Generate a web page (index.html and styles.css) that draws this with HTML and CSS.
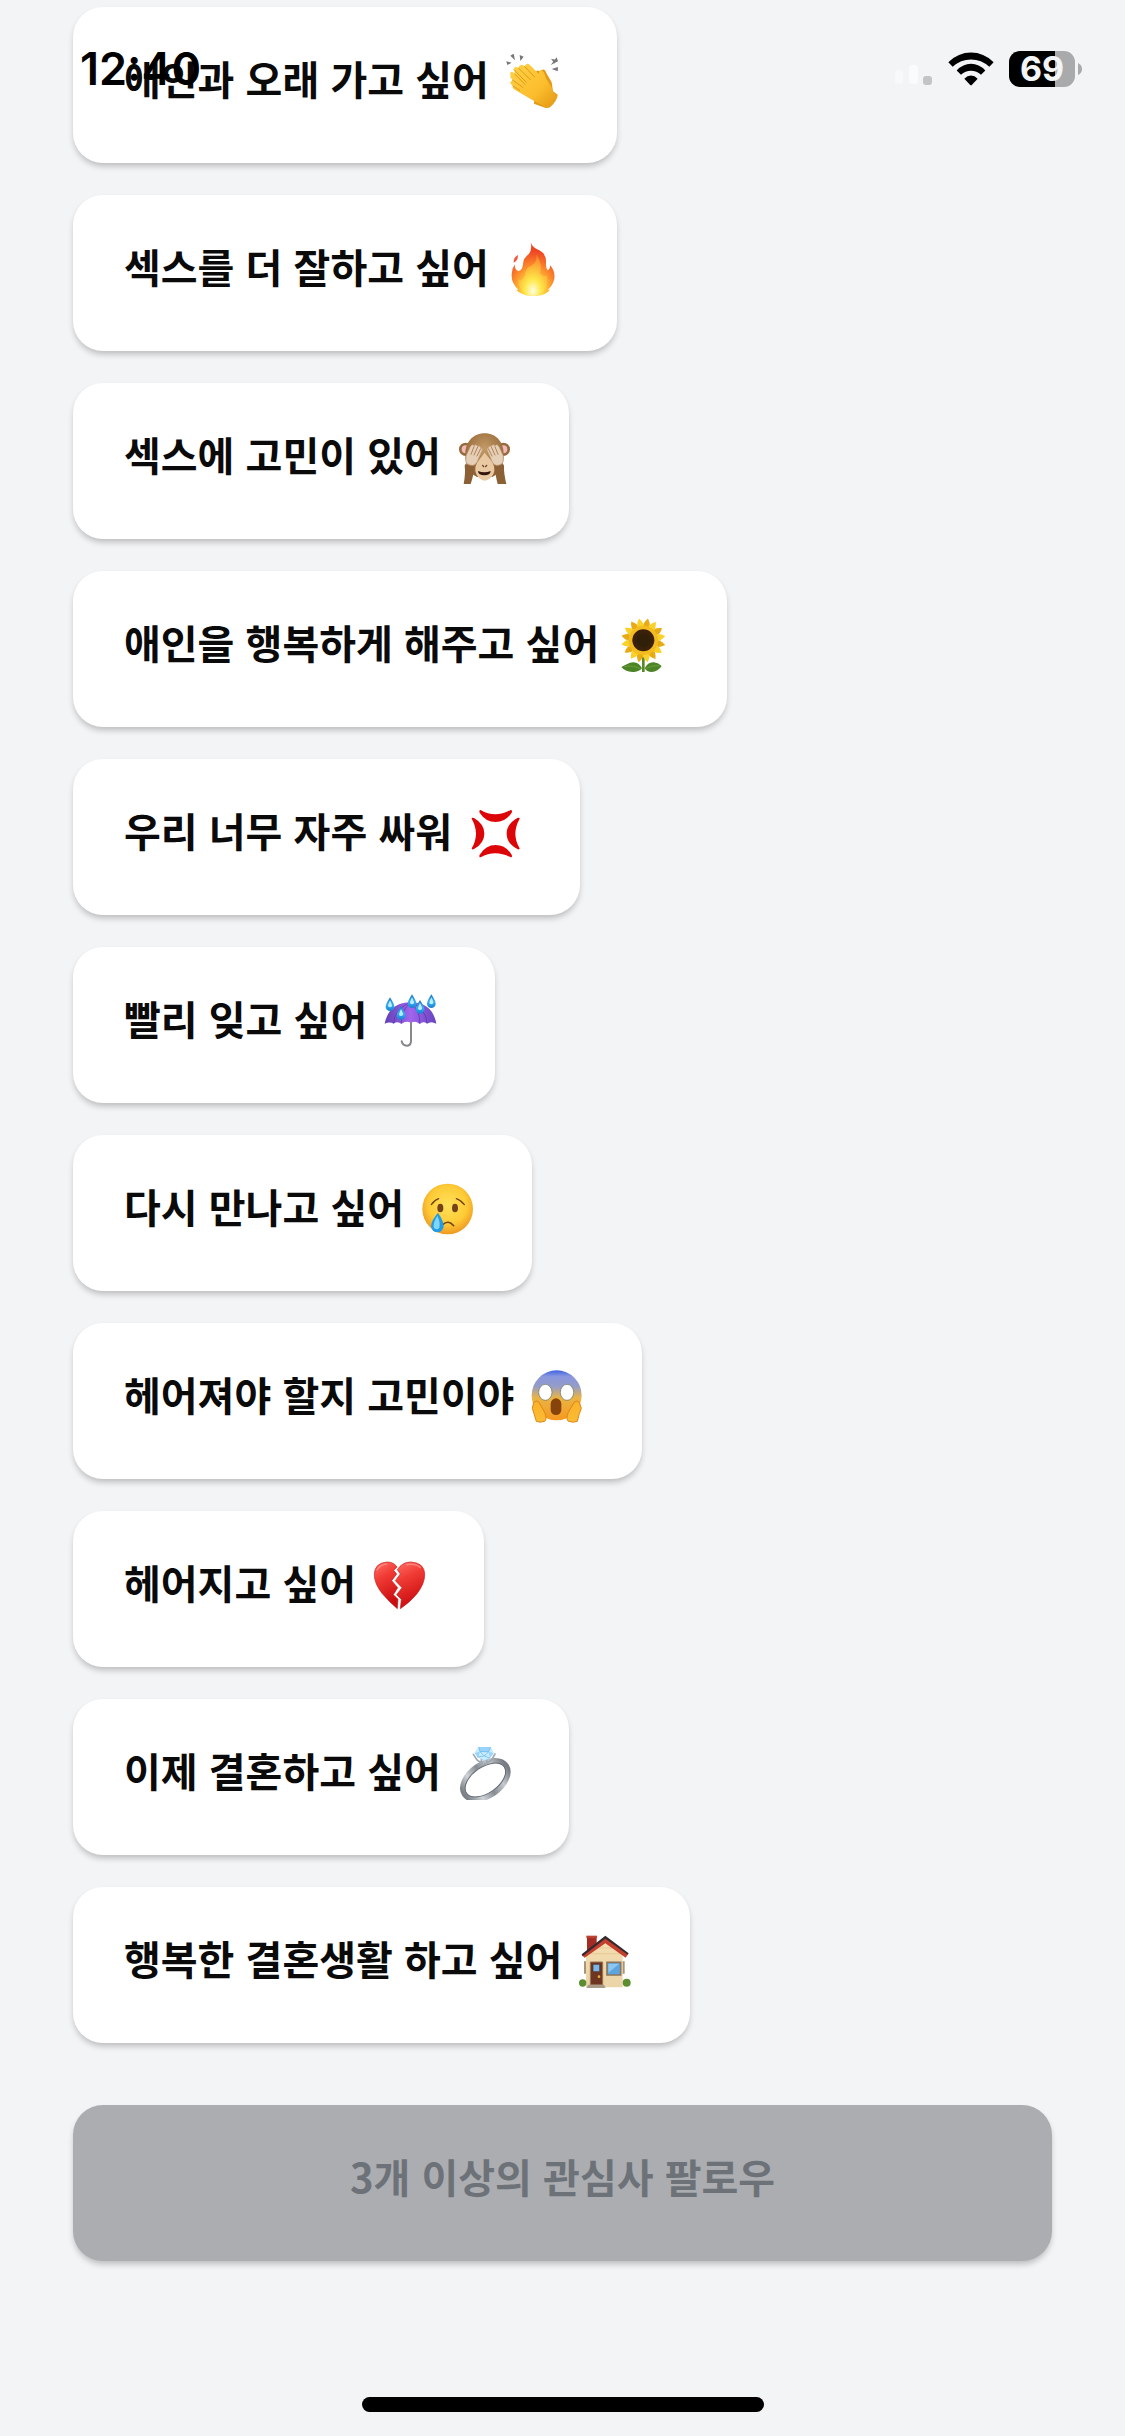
FILE: index.html
```html
<!DOCTYPE html>
<html lang="ko">
<head>
<meta charset="utf-8">
<meta name="viewport" content="width=device-width, initial-scale=1">
<title>관심사 선택</title>
<link rel="stylesheet" href="styles.css">
</head>
<body>
<header class="status">
  <time class="clock">12:40</time>
  <div class="indicators">
    <svg class="signal" viewBox="0 0 38 36" aria-hidden="true">
      <rect x="0" y="19" width="8" height="14" rx="3" fill="#f8f9fa"/>
      <rect x="14" y="14" width="9" height="19" rx="3" fill="#fafbfc"/>
      <rect x="28" y="25" width="9" height="9" rx="3" fill="#c3c4c5"/>
    </svg>
    <svg class="wifi" viewBox="204 65 138 101" aria-hidden="true">
      <path d="M205 95Q235 66 273 66T341 95L328 109Q304 87 273 87T218 109Z"/>
      <path d="M230 120Q249 100 273 100T316 120L303 133Q290 121 273 121T243 133Z"/>
      <path d="M253 145Q262 135 273 135T293 145L276 163Q273 166 270 163Z"/>
    </svg>
    <div class="battery">
      <span class="level">69</span>
      <svg class="nub" viewBox="0 0 4 12" aria-hidden="true"><path d="M0 0Q4 2 4 6T0 12Z" fill="#a9aaab"/></svg>
    </div>
  </div>
</header>

<main class="page">
  <ul class="topics">
    <li><button class="topic" type="button">애인과 오래 가고 싶어
      <svg class="emoji" viewBox="51 45 162 162" aria-hidden="true">
        <defs>
          <linearGradient id="skin" x1="0" y1="0" x2="1" y2="1"><stop offset="0" stop-color="#ffd24a"/><stop offset=".6" stop-color="#fcbd2c"/><stop offset="1" stop-color="#e19413"/></linearGradient>
        </defs>
        <path fill="#777" d="M64 50L74 44 78 64ZM52 67L68 71 55 78ZM92 48L104 53 94 66ZM186 59L199 62 197 74ZM203 55L207 67 185 78ZM188 90L207 84 206 97Z"/>
        <path fill="#e39b17" d="M139 101Q143 92 151 96L160 92Q168 90 172 102L188 130 192 157 206 167Q206 178 190 196L170 207 135 194Z"/>
        <path fill="url(#skin)" d="M65 110Q60 98 70 98L77 105 75 88Q80 78 89 88L90 82Q98 72 107 82Q112 70 122 77L150 106Q148 94 157 94Q165 96 170 116L188 146 192 159 205 169Q203 188 184 204Q172 211 162 200L126 181 80 154Q67 148 72 141L66 136Q60 126 71 126L70 121Q61 117 65 110Z"/>
        <path fill="none" stroke="#e09a18" stroke-width="3" stroke-linecap="round" d="M75 92L112 130M89 88L124 122M107 83L137 114M70 123L102 145M72 141L92 154M77 105L109 137"/>
      </svg></button></li>
    <li><button class="topic" type="button">섹스를 더 잘하고 싶어
      <svg class="emoji" viewBox="51 54 162 162" aria-hidden="true">
        <defs>
          <radialGradient id="fire" cx=".5" cy=".92" r=".9"><stop offset="0" stop-color="#fff8b0"/><stop offset=".25" stop-color="#ffd83c"/><stop offset=".55" stop-color="#fb8a2c"/><stop offset=".85" stop-color="#ee4523"/></radialGradient>
          <radialGradient id="flame" cx=".5" cy=".88" r=".8"><stop offset="0" stop-color="#fffde0"/><stop offset=".35" stop-color="#ffe84a"/><stop offset="1" stop-color="#fb8f2c"/></radialGradient>
        </defs>
        <path fill="#ee5b3d" d="M87 93Q73 99 74 116Q87 111 87 93Z"/>
        <path fill="url(#fire)" d="M125 55Q130 71 151 79Q173 90 171 118Q170 131 176 139Q182 137 184 124Q201 146 195 168Q190 187 176 197L183 197Q168 216 132 217Q99 215 81 197L88 197Q68 178 68 155Q67 137 77 121Q77 138 88 141Q100 140 102 121Q102 103 119 91Q130 79 125 55Z"/>
        <path fill="url(#flame)" d="M142 92Q163 125 153 148Q160 161 174 154Q182 211 132 215Q89 214 88 166Q99 173 108 153Q109 130 127 125Q147 112 142 92Z"/>
      </svg></button></li>
    <li><button class="topic" type="button">섹스에 고민이 있어
      <svg class="emoji" viewBox="57 48 162 162" aria-hidden="true">
        <defs>
          <radialGradient id="fur" cx=".5" cy=".35" r=".65"><stop offset="0" stop-color="#c39a66"/><stop offset="1" stop-color="#8e6131"/></radialGradient>
        </defs>
        <circle cx="80" cy="106" r="20" fill="#956a3e"/><circle cx="193" cy="106" r="20" fill="#956a3e"/>
        <circle cx="80" cy="106" r="12" fill="#f1b9b7"/><circle cx="193" cy="106" r="12" fill="#f1b9b7"/>
        <path fill="url(#fur)" d="M137 58C174 58 194 87 194 120Q196 171 160 189H114Q77 171 79 120C79 87 100 58 137 58Z"/>
        <path fill="#e8c9a2" d="M120 138L137 116 155 138Q172 158 163 181Q153 199 137 200Q121 199 112 181Q103 158 120 138Z"/>
        <path fill="#33150c" d="M117 171Q136 179 155 171Q154 184 136 184T117 171Z"/>
        <path fill="none" stroke="#6c4325" stroke-width="4" stroke-linecap="round" d="M131 154L134 158M143 154L140 158"/>
        <path fill="#8b6035" d="M80 149Q92 161 107 152Q103 188 95 210H74Q80 177 77 155ZM192 149Q180 161 166 152Q170 188 176 210H202Q194 177 195 155Z"/>
        <path fill="#e6cfb7" stroke="#c29e7a" stroke-width="2" d="M81 126L94 98Q100 88 105 95Q112 88 116 97Q123 93 125 101Q132 101 129 110L119 132Q113 153 101 154Q83 153 81 143ZM193 126L180 98Q174 88 168 95Q161 88 157 97Q150 93 148 101Q142 101 145 110L155 132Q161 153 173 154Q190 153 192 143Z"/>
        <path fill="none" stroke="#ad8259" stroke-width="3" stroke-linecap="round" d="M105 98L96 121M116 99L105 123M125 104L114 126M168 98L177 121M157 99L168 123M148 104L159 126"/>
      </svg></button></li>
    <li><button class="topic" type="button">애인을 행복하게 해주고 싶어
      <svg class="emoji" viewBox="57 54 162 162" aria-hidden="true">
        <defs>
          <path id="petal" d="M139 54Q154 72 149 94H129Q124 72 139 54Z"/>
          <g id="petals"><use href="#petal"/><use href="#petal" transform="rotate(45 139 121)"/><use href="#petal" transform="rotate(90 139 121)"/><use href="#petal" transform="rotate(135 139 121)"/><use href="#petal" transform="rotate(180 139 121)"/><use href="#petal" transform="rotate(225 139 121)"/><use href="#petal" transform="rotate(270 139 121)"/><use href="#petal" transform="rotate(315 139 121)"/></g>
        </defs>
        <path stroke="#568b28" stroke-width="8" d="M139 170V218"/>
        <path fill="#4c8428" d="M135 205Q123 181 99 188Q83 195 73 201Q84 215 106 216Q125 217 135 205ZM143 205Q153 185 171 187Q185 189 194 198Q183 215 164 216Q149 216 143 205Z"/>
        <path fill="none" stroke="#7aab3f" stroke-width="2" d="M82 200Q106 194 132 207M146 206Q164 195 187 197"/>
        <use href="#petals" fill="#e8ab16" transform="rotate(12 139 121)"/>
        <use href="#petals" fill="#fad02b" transform="rotate(-11 139 121)"/>
        <circle cx="139" cy="121" r="44" fill="#f3bc20"/>
        <circle cx="139" cy="121" r="33" fill="#3b210b"/><circle cx="139" cy="121" r="21" fill="#302008"/>
      </svg></button></li>
    <li><button class="topic" type="button">우리 너무 자주 싸워
      <svg class="emoji" viewBox="300 78 162 162" aria-hidden="true">
        <path fill="#dc0609" d="M335 90Q378 116 425 90Q431 90 428 98Q410 126 380 126Q350 126 332 98Q329 90 335 90ZM335 232Q378 208 425 232Q431 232 428 224Q410 195 380 195Q350 195 332 224Q329 232 335 232ZM308 116Q334 162 308 205Q308 210 315 207Q346 190 346 161Q346 132 315 114Q307 112 308 116ZM452 116Q426 162 452 205Q452 210 445 207Q413 190 413 161Q413 132 445 114Q453 112 452 116Z"/>
      </svg></button></li>
    <li><button class="topic" type="button">빨리 잊고 싶어
      <svg class="emoji" viewBox="45 642 162 162" aria-hidden="true">
        <defs>
          <linearGradient id="canopy"><stop offset="0" stop-color="#6140b5"/><stop offset=".5" stop-color="#a265ee"/><stop offset="1" stop-color="#6743bd"/></linearGradient>
          <linearGradient id="drop" x1="0" y1="0" x2="0" y2="1"><stop offset="0" stop-color="#1d78c2"/><stop offset=".55" stop-color="#38aef0"/><stop offset="1" stop-color="#1682d3"/></linearGradient>
          <g id="rain"><path fill="url(#drop)" d="M0-20Q13 0 13 8A13 13 0 0 1-13 8Q-13 0 0-20Z"/><path fill="#b9ecff" d="M0-11Q7 2 6 7Q0 13-6 7Q-6 0 0-11Z"/></g>
        </defs>
        <path fill="none" stroke="#87888b" stroke-width="6" stroke-linecap="round" d="M126 726V784Q125 797 113 797Q101 797 98 784"/>
        <path fill="url(#canopy)" d="M47 731Q60 667 125 667T202 731Q187 722 174 731Q163 722 152 732Q138 720 126 729Q112 720 97 732Q86 722 74 731Q62 724 47 731Z"/>
        <path fill="none" stroke="#56349f" stroke-width="2" d="M125 668Q95 692 97 729M125 668Q155 695 152 730M120 668Q75 692 74 729M132 668Q172 692 174 729"/>
        <use href="#rain" x="63" y="672"/><use href="#rain" x="129" y="663"/><use href="#rain" x="187" y="663"/><use href="#rain" x="153" y="680"/><use href="#rain" x="96" y="698"/>
      </svg></button></li>
    <li><button class="topic" type="button">다시 만나고 싶어
      <svg class="emoji" viewBox="36 36 162 162" aria-hidden="true">
        <defs>
          <radialGradient id="face" cx=".5" cy=".42" r=".58"><stop offset="0" stop-color="#ffe15a"/><stop offset=".65" stop-color="#fecb36"/><stop offset="1" stop-color="#ee9821"/></radialGradient>
        </defs>
        <circle cx="116" cy="117" r="76" fill="url(#face)"/>
        <ellipse cx="94" cy="114" rx="9" ry="13" fill="#74421a"/><ellipse cx="138" cy="114" rx="9" ry="13" fill="#74421a"/>
        <path fill="none" stroke="#744414" stroke-width="4" stroke-linecap="round" d="M67 104Q75 91 89 86M142 86Q155 90 166 104"/>
        <path fill="none" stroke="#744414" stroke-width="5" stroke-linecap="round" d="M101 164Q118 148 134 167"/>
        <path fill="#259be5" d="M87 128Q104 153 104 168A19 19 0 0 1 66 168Q67 151 87 128Z"/>
        <path fill="#7ed7fa" d="M85 137Q95 157 91 173Q84 182 75 174Q70 162 85 137Z"/>
      </svg></button></li>
    <li><button class="topic" type="button">헤어져야 할지 고민이야
      <svg class="emoji" viewBox="42 60 162 162" aria-hidden="true">
        <defs>
          <linearGradient id="scream" x1="0" y1="0" x2="0" y2="1"><stop offset="0" stop-color="#3d63df"/><stop offset=".12" stop-color="#8896df"/><stop offset=".32" stop-color="#949cc8"/><stop offset=".55" stop-color="#e9b445"/><stop offset="1" stop-color="#f6981f"/></linearGradient>
          <linearGradient id="palm" x1="0" y1="0" x2="0" y2="1"><stop offset="0" stop-color="#fbb12a"/><stop offset="1" stop-color="#f9bd35"/></linearGradient>
        </defs>
        <circle cx="119" cy="136" r="75" fill="url(#scream)"/>
        <ellipse cx="85" cy="127" rx="20" ry="24" fill="#fff" stroke="#68705e" stroke-width="2"/><ellipse cx="150" cy="127" rx="20" ry="24" fill="#fff" stroke="#68705e" stroke-width="2"/>
        <rect x="101" y="145" width="32" height="50" rx="16" fill="#86430b"/>
        <path fill="url(#palm)" stroke="#df8617" stroke-width="3" d="M50 157Q59 149 66 157L83 187Q91 207 83 214Q69 219 58 214Q51 191 46 175ZM187 157Q178 149 171 157L154 187Q146 207 154 214Q169 219 181 214Q186 191 193 175Z"/>
      </svg></button></li>
    <li><button class="topic" type="button">헤어지고 싶어
      <svg class="emoji" viewBox="42 51 162 162" aria-hidden="true">
        <defs>
          <linearGradient id="heart" x1="0" y1="0" x2=".3" y2="1"><stop offset="0" stop-color="#ff716a"/><stop offset=".4" stop-color="#f03b34"/><stop offset="1" stop-color="#c90d10"/></linearGradient>
        </defs>
        <path fill="url(#heart)" stroke="#c81b1b" stroke-width="2" d="M114 78Q104 63 84 63Q46 66 46 101Q46 128 70 158Q91 183 115 203L117 175 103 161 116 140 98 119 113 99 104 88Z"/>
        <path fill="url(#heart)" stroke="#c81b1b" stroke-width="2" d="M123 76Q136 63 157 63Q197 66 197 101Q197 128 174 158Q154 183 124 203L127 175 113 161 129 140 109 119 124 99 115 86Z"/>
        <path fill="none" stroke="#ffa39d" stroke-width="4" stroke-linecap="round" opacity=".6" d="M54 87Q63 71 83 69M143 71Q170 66 184 80"/>
      </svg></button></li>
    <li><button class="topic" type="button">이제 결혼하고 싶어
      <svg class="emoji" viewBox="297 615 162 162" aria-hidden="true">
        <defs>
          <linearGradient id="band"><stop offset="0" stop-color="#7b8087"/><stop offset=".25" stop-color="#d0d3d8"/><stop offset=".5" stop-color="#878c94"/><stop offset=".75" stop-color="#c6c9ce"/><stop offset="1" stop-color="#777c84"/></linearGradient>
        </defs>
        <g transform="rotate(-35 379 717)"><ellipse cx="379" cy="717" rx="76" ry="47" fill="none" stroke="url(#band)" stroke-width="16"/><ellipse cx="379" cy="717" rx="69" ry="39" fill="none" stroke="#666c75" stroke-width="3"/></g>
        <path fill="none" stroke="#a2a8af" stroke-width="5" stroke-linecap="round" d="M343 640L354 657 374 671 397 658 408 639M367 668V656M383 669V656"/>
        <path fill="#98d3fb" d="M359 618H395L404 637 393 651 376 660 355 648 347 636Z"/>
        <path fill="#c7edff" d="M359 618L363 632 347 636ZM395 618L389 632 404 637ZM363 632H389L393 650 376 658 357 648Z"/>
        <path fill="none" stroke="#62afe9" stroke-width="2" d="M359 618L363 632H389L395 618M363 632L376 645 389 632M355 648L376 645 393 651"/>
      </svg></button></li>
    <li><button class="topic" type="button">행복한 결혼생활 하고 싶어
      <svg class="emoji" viewBox="66 69 162 162" aria-hidden="true">
        <defs>
          <linearGradient id="wall" x1="0" y1="0" x2="0" y2="1"><stop offset="0" stop-color="#f5deb0"/><stop offset="1" stop-color="#ead4a8"/></linearGradient>
        </defs>
        <path fill="#a42c24" d="M90 76H119V101L90 125Z"/><path fill="#bc4234" d="M88 74H120V81H88Z"/>
        <path fill="url(#wall)" d="M87 128L145 83 197 128V229H87Z"/>
        <path fill="none" stroke="#dcc18d" stroke-width="2" d="M103 128H190M124 111H166"/>
        <path fill="#a99475" d="M81 151H87V188H81ZM197 151H203V188H197Z"/>
        <path fill="#c43e30" d="M145 80L213 130 206 140 145 97 83 140 75 133Z"/><path fill="#342a2d" d="M145 74L215 127 212 131 145 83 77 136 74 130Z"/>
        <path fill="#6e3521" stroke="#9c7755" stroke-width="3" d="M100 153H137V222H100Z"/><path fill="#78b6eb" stroke="#4a3429" stroke-width="2" d="M108 160H128V182H108Z"/><circle cx="126" cy="197" r="4" fill="#e4b03c"/>
        <path fill="#5da5df" stroke="#8c755b" stroke-width="5" d="M150 154H191V192H150Z"/><path fill="#8dc6f1" d="M154 158H187L154 185Z"/>
        <circle cx="77" cy="216" r="11" fill="#5c8d30"/><circle cx="209" cy="215" r="12" fill="#5c8d30"/>
        <path fill="#aa9b89" d="M94 221H141L146 231H88Z"/>
      </svg></button></li>
  </ul>
  <button class="follow" type="button" disabled>3개 이상의 관심사 팔로우</button>
</main>
<div class="home-bar"></div>
</body>
</html>
```
FILE: styles.css
```css
* { box-sizing: border-box; }

body {
  margin: 0;
  min-height: 100vh;
  display: flex;
  flex-direction: column;
  background: #f3f4f6;
  color: #0a0a0a;
  font-family: "Noto Sans CJK KR", "Noto Sans", sans-serif;
}

/* The status bar floats over the scrolled list. */
.status {
  position: absolute;
  inset: 0 0 auto;
  height: 138px;
  padding: 0 43px 0 80px;
  display: flex;
  align-items: center;
  justify-content: space-between;
  color: #000;
  font-family: Inter, sans-serif;
  pointer-events: none;
}

.clock { font-size: 45px; font-weight: 600; line-height: 60px; }

.indicators { display: flex; align-items: center; gap: 15px; }
.signal { width: 38px; height: 36px; }
.wifi { width: 46px; height: 34px; }
.battery { display: flex; align-items: center; gap: 3px; }

.level {
  width: 66px;
  height: 36px;
  border-radius: 11px;
  background: linear-gradient(90deg, #000 70%, #a9aaab 70%);
  color: #f3f4f6;
  font-size: 34px;
  font-weight: 700;
  line-height: 36px;
  text-align: center;
}

.nub { width: 4px; height: 12px; }

.page {
  flex: 1;
  display: flex;
  flex-direction: column;
  gap: 62px;
  padding: 7px 73px 0;
}

.topics {
  margin: 0;
  padding: 0;
  list-style: none;
  display: flex;
  flex-direction: column;
  align-items: flex-start;
  gap: 32px;
}

.topic,
.follow {
  border: 0;
  border-radius: 30px;
  box-shadow: 0 4px 6px -1px rgba(0, 0, 0, 0.24);
  font-family: inherit;
  font-size: 40px;
  font-weight: 600;
  line-height: 48px;
}

.topic {
  display: flex;
  align-items: flex-start;
  gap: 17px;
  padding: 47px 57px 55px 51px;
  background: #fff;
  color: inherit;
}

.emoji { width: 54px; height: 54px; flex: none; }

.follow {
  width: 100%;
  padding: 47px 48px 61px;
  background: #abadb0;
  color: #6d7278;
}

.home-bar {
  align-self: center;
  width: 402px;
  height: 15px;
  margin: 24px 0;
  border-radius: 8px;
  background: #000;
}
```
